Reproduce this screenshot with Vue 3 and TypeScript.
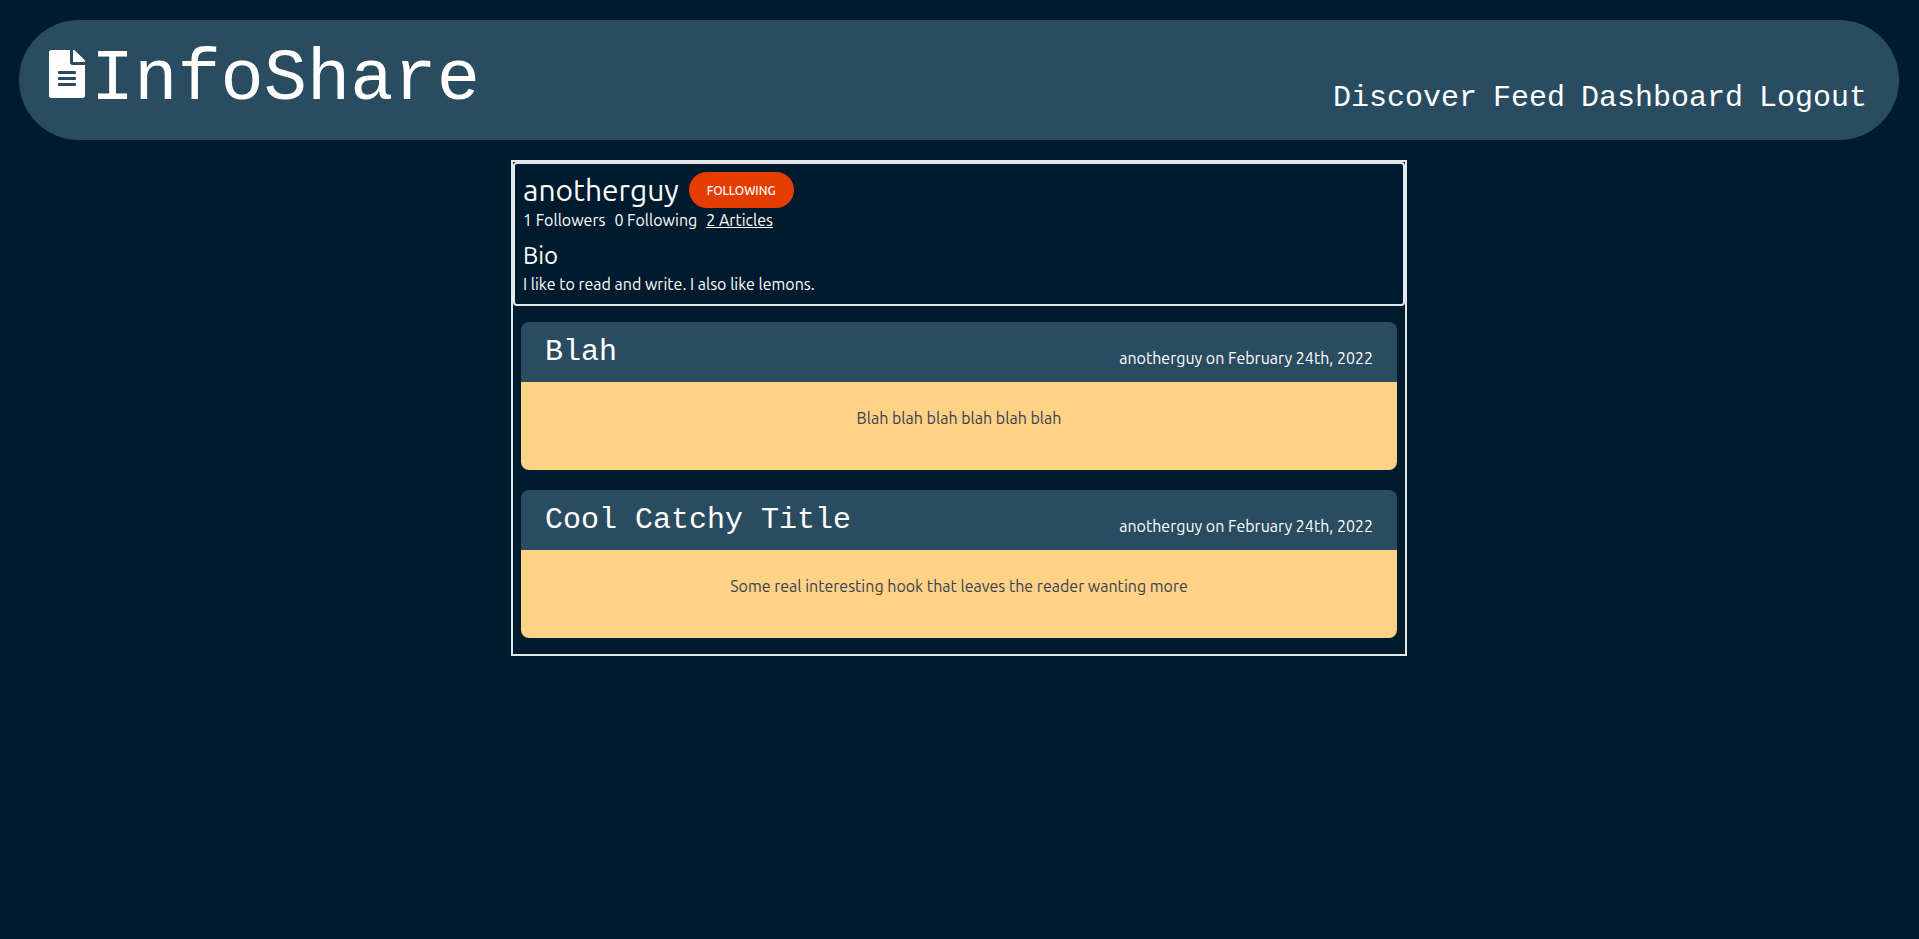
<script setup lang="ts">
interface Article {
  id: number
  title: string
  byline: string
  hook: string
}

const links: string[] = ['Discover', 'Feed', 'Dashboard', 'Logout']

const articles: Article[] = [
  { id: 1, title: 'Blah', byline: 'anotherguy on February 24th, 2022', hook: 'Blah blah blah blah blah blah' },
  {
    id: 2,
    title: 'Cool Catchy Title',
    byline: 'anotherguy on February 24th, 2022',
    hook: 'Some real interesting hook that leaves the reader wanting more',
  },
]
</script>

<template>
  <div class="page">
    <header class="site-header">
      <a class="brand" href="#">
        <svg class="brand-icon" viewBox="0 0 384 512" aria-hidden="true">
          <path
            fill="currentColor"
            d="M224 136V0H24C10.7 0 0 10.7 0 24v464c0 13.3 10.7 24 24 24h336c13.3 0 24-10.7 24-24V160H248c-13.2 0-24-10.8-24-24zm64 236c0 6.6-5.4 12-12 12H108c-6.6 0-12-5.4-12-12v-8c0-6.6 5.4-12 12-12h168c6.6 0 12 5.4 12 12v8zm0-64c0 6.6-5.4 12-12 12H108c-6.6 0-12-5.4-12-12v-8c0-6.6 5.4-12 12-12h168c6.6 0 12 5.4 12 12v8zm0-72v8c0 6.6-5.4 12-12 12H108c-6.6 0-12-5.4-12-12v-8c0-6.6 5.4-12 12-12h168c6.6 0 12 5.4 12 12zm96-114.1v6.1H256V0h6.1c6.4 0 12.5 2.5 17 7l97.9 98c4.5 4.5 7 10.6 7 16.9z"
          />
        </svg>
        <span>InfoShare</span>
      </a>
      <nav class="links">
        <a v-for="link in links" :key="link" href="#">{{ link }}</a>
      </nav>
    </header>

    <main class="profile">
      <section class="summary">
        <div class="name-row">
          <h1>anotherguy</h1>
          <button type="button" class="follow">FOLLOWING</button>
        </div>
        <div class="stats">
          <span>1 Followers</span>
          <span>0 Following</span>
          <a href="#">2 Articles</a>
        </div>
        <h2>Bio</h2>
        <p>I like to read and write. I also like lemons.</p>
      </section>

      <div class="articles">
        <article v-for="article in articles" :key="article.id" class="card">
          <div class="card-head">
            <h3>{{ article.title }}</h3>
            <span>{{ article.byline }}</span>
          </div>
          <p class="hook">{{ article.hook }}</p>
        </article>
      </div>
    </main>
  </div>
</template>

<style>
body {
  margin: 0;
  background: #001b2e;
  color: #fff;
  font-family: Ubuntu, 'Noto Sans', sans-serif;
  font-size: 16px;
  line-height: 24px;
}
</style>

<style scoped>
h1,
h2,
h3,
p {
  margin: 0;
  font-weight: 400;
}

a {
  color: inherit;
  text-decoration: none;
}

.page {
  padding: 20px 20px 20px 19px;
}

.site-header {
  display: flex;
  justify-content: space-between;
  padding: 24px 32px 24px 30px;
  border-radius: 60px;
  background: #294c60;
  font-family: 'Liberation Mono', monospace;
}

.brand {
  display: flex;
  align-items: flex-start;
  gap: 6px;
  font-size: 72px;
  line-height: 72px;
}

.brand-icon {
  width: 36px;
  height: 48px;
  margin-top: 6px;
}

.links {
  display: flex;
  align-items: flex-end;
  gap: 16px;
  font-size: 30px;
  line-height: 36px;
}

.profile {
  box-sizing: border-box;
  max-width: 896px;
  margin: 20px auto 0;
  border: 2px solid #e5e7eb;
}

.summary {
  padding: 8px;
  border: 2px solid #e5e7eb;
  border-radius: 4px;
}

.name-row {
  display: flex;
  align-items: center;
  gap: 10px;
}

h1 {
  font-size: 30px;
  line-height: 36px;
}

.follow {
  padding: 11px 18px 9px;
  border: 0;
  border-radius: 18px;
  background: #e53d00;
  color: #fff;
  font-family: inherit;
  font-size: 12px;
  font-weight: 500;
  line-height: 16px;
}

.stats {
  display: flex;
  gap: 9px;
}

.stats a {
  text-decoration: underline;
}

h2 {
  margin-top: 8px;
  font-size: 24px;
  line-height: 32px;
}

.articles {
  display: flex;
  flex-direction: column;
  gap: 20px;
  padding: 16px 8px;
}

.card {
  overflow: hidden;
  border-radius: 8px;
}

.card-head {
  display: flex;
  justify-content: space-between;
  align-items: flex-end;
  padding: 12px 24px;
  background: #294c60;
}

h3 {
  font-family: 'Liberation Mono', monospace;
  font-size: 30px;
  line-height: 36px;
}

.hook {
  padding: 24px 24px 40px;
  background: #ffd285;
  color: #374151;
  text-align: center;
}
</style>
